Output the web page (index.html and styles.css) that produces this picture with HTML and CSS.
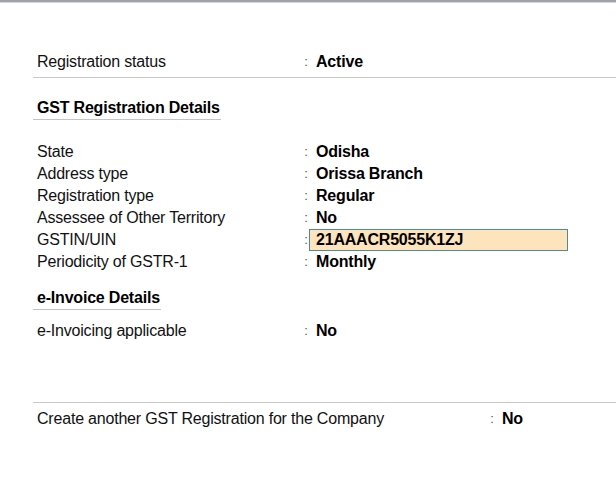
FILE: index.html
```html
<!DOCTYPE html>
<html lang="en">
<head>
<meta charset="utf-8">
<title>GST Details</title>
<link rel="stylesheet" href="styles.css">
</head>
<body>
<div class="topbar"></div>
<main class="form">
  <div class="row first">
    <span class="label">Registration status</span>
    <span class="colon">:</span>
    <span class="value">Active</span>
  </div>
  <hr class="rule">

  <div class="section">
    <h2 class="heading">GST Registration Details</h2>
  </div>
  <div class="group">
    <div class="row"><span class="label">State</span><span class="colon">:</span><span class="value">Odisha</span></div>
    <div class="row"><span class="label">Address type</span><span class="colon">:</span><span class="value">Orissa Branch</span></div>
    <div class="row"><span class="label">Registration type</span><span class="colon">:</span><span class="value">Regular</span></div>
    <div class="row"><span class="label">Assessee of Other Territory</span><span class="colon">:</span><span class="value">No</span></div>
    <div class="row"><span class="label">GSTIN/UIN</span><span class="colon">:</span><span class="value field">21AAACR5055K1ZJ</span></div>
    <div class="row"><span class="label">Periodicity of GSTR-1</span><span class="colon">:</span><span class="value">Monthly</span></div>
  </div>

  <div class="section small">
    <h2 class="heading">e-Invoice Details</h2>
  </div>
  <div class="group tight">
    <div class="row"><span class="label">e-Invoicing applicable</span><span class="colon">:</span><span class="value">No</span></div>
  </div>

  <hr class="rule bottom">
  <div class="row wide">
    <span class="label">Create another GST Registration for the Company</span>
    <span class="colon">:</span>
    <span class="value">No</span>
  </div>
</main>
</body>
</html>
```

FILE: styles.css
```css
html, body {
  margin: 0;
  padding: 0;
  background: #ffffff;
}

body {
  font-family: "Liberation Sans", Arial, sans-serif;
  font-size: 16px;
  letter-spacing: -0.2px;
  color: #111111;
  width: 616px;
  height: 487px;
  overflow: hidden;
}

.topbar {
  height: 2px;
  background: #9fa3a7;
  border-bottom: 1px solid #d4d6d8;
}

.form {
  padding-top: 48px;
}

.row {
  display: grid;
  grid-template-columns: 266px 6px 1fr;
  height: 22px;
  line-height: 22px;
  padding-left: 37px;
  align-items: center;
}

.row.wide {
  grid-template-columns: 452px 6px 1fr;
  margin-top: 5px;
}

.label {
  white-space: nowrap;
}

.colon {
  font-size: 13px;
  color: #555;
  text-align: center;
}

.value {
  font-weight: bold;
  padding-left: 7px;
  color: #000;
}

.value.field {
  width: 251px;
  height: 20px;
  line-height: 20px;
  background: #fde4bc;
  border: 1px solid #4e8b9a;
  padding-left: 6px;
}

.rule {
  margin: 4px 0 0 33px;
  border: 0;
  height: 1px;
  background: #c9c9c9;
}

.rule.bottom {
  margin-top: 60px;
}

.section {
  padding-left: 33px;
  margin-top: 19px;
}

.section.small {
  margin-top: 14px;
}

.heading {
  display: inline-block;
  margin: 0;
  padding: 0 1px 0 4px;
  font-size: 16px;
  font-weight: bold;
  line-height: 22px;
  border-bottom: 1px solid #c4c4c4;
  color: #000;
}

.group {
  margin-top: 21px;
}

.group.tight {
  margin-top: 10px;
}
```
